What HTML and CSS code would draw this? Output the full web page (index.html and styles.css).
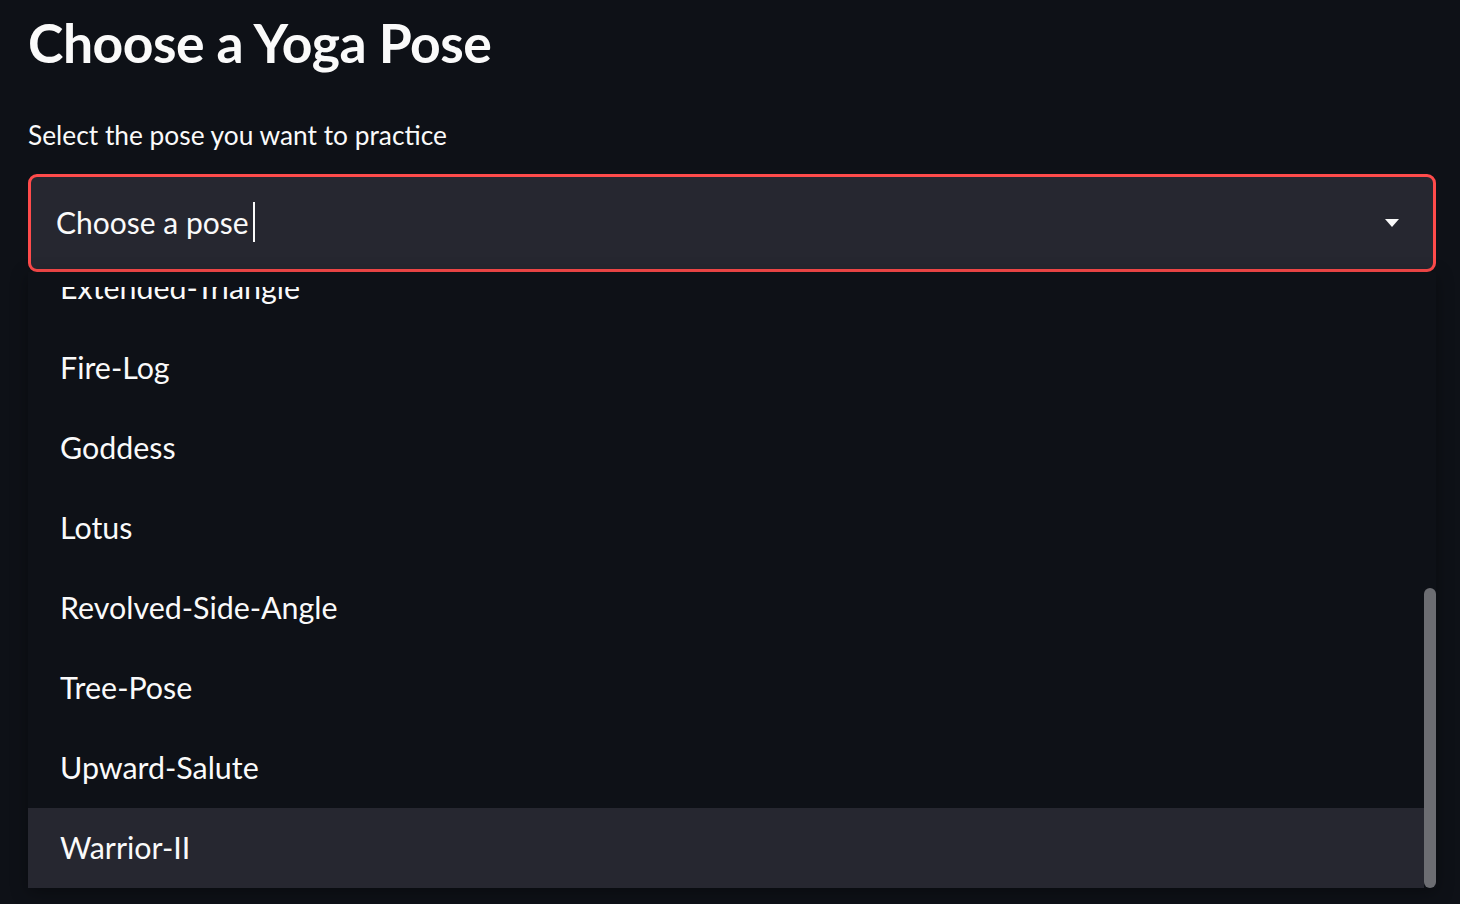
FILE: index.html
```html
<!DOCTYPE html>
<html>
<head>
<meta charset="utf-8">
<link rel="stylesheet" href="styles.css">
</head>
<body>
<main class="app">
  <h1 class="title">Choose a Yoga Pose</h1>
  <label class="label">Select the pose you want to practice</label>
  <div class="select-wrap">
    <div class="select">
      <span class="select-text">Choose a pose</span><span class="caret"></span>
      <svg class="arrow" width="14" height="8" viewBox="0 0 14 8"><path d="M0 0 H14 L7 8 Z" fill="#fafafa"/></svg>
    </div>
    <div class="dropdown">
      <div class="viewport">
        <ul class="list">
          <li class="item">Extended-Triangle</li>
          <li class="item">Fire-Log</li>
          <li class="item">Goddess</li>
          <li class="item">Lotus</li>
          <li class="item">Revolved-Side-Angle</li>
          <li class="item">Tree-Pose</li>
          <li class="item">Upward-Salute</li>
          <li class="item active">Warrior-II</li>
        </ul>
      </div>
      <div class="scrollbar"></div>
    </div>
  </div>
</main>
</body>
</html>
```
FILE: styles.css
```css
html, body {
  margin: 0;
  padding: 0;
  background: #0e1117;
  height: 100%;
  overflow: hidden;
}
body {
  font-family: "Lato", "Open Sans", sans-serif;
  color: #fafafa;
}
.app {
  padding: 0 24px 0 28px;
  display: flex;
  flex-direction: column;
}
.title {
  margin: 0;
  font-size: 53.5px;
  font-weight: 700;
  line-height: 84px;
  letter-spacing: -0.5px;
}
.label {
  display: block;
  margin-top: 35px;
  font-size: 26.3px;
  line-height: 32px;
}
.select-wrap {
  position: relative;
  margin-top: 23px;
}
.select {
  box-sizing: border-box;
  height: 98px;
  border: 3px solid #ff4b4b;
  border-radius: 9px;
  background: #262730;
  display: flex;
  align-items: center;
  padding: 0 34px 2px 25px;
}
.select-text {
  font-size: 30px;
  line-height: 40px;
}
.caret {
  display: inline-block;
  width: 2px;
  height: 40px;
  background: #fafafa;
  margin-left: 4px;
}
.arrow {
  margin-left: auto;
  margin-top: 2px;
}
.dropdown {
  position: absolute;
  left: 0;
  right: 0;
  top: 98px;
  height: 616px;
  background: #0e1117;
  box-shadow: 0 4px 16px rgba(0, 0, 0, 0.35);
}
.viewport {
  margin-top: 15px;
  height: 601px;
  overflow: hidden;
}
.list {
  list-style: none;
  margin: -39px 12px 0 0;
  padding: 0;
}
.item {
  box-sizing: border-box;
  height: 80px;
  display: flex;
  align-items: center;
  padding: 0 0 2px 32px;
  font-size: 30.4px;
}
.item.active {
  background: #262730;
}
.scrollbar {
  position: absolute;
  right: 0;
  top: 316px;
  width: 12px;
  height: 300px;
  border-radius: 6px;
  background: #6c6d72;
}
```
